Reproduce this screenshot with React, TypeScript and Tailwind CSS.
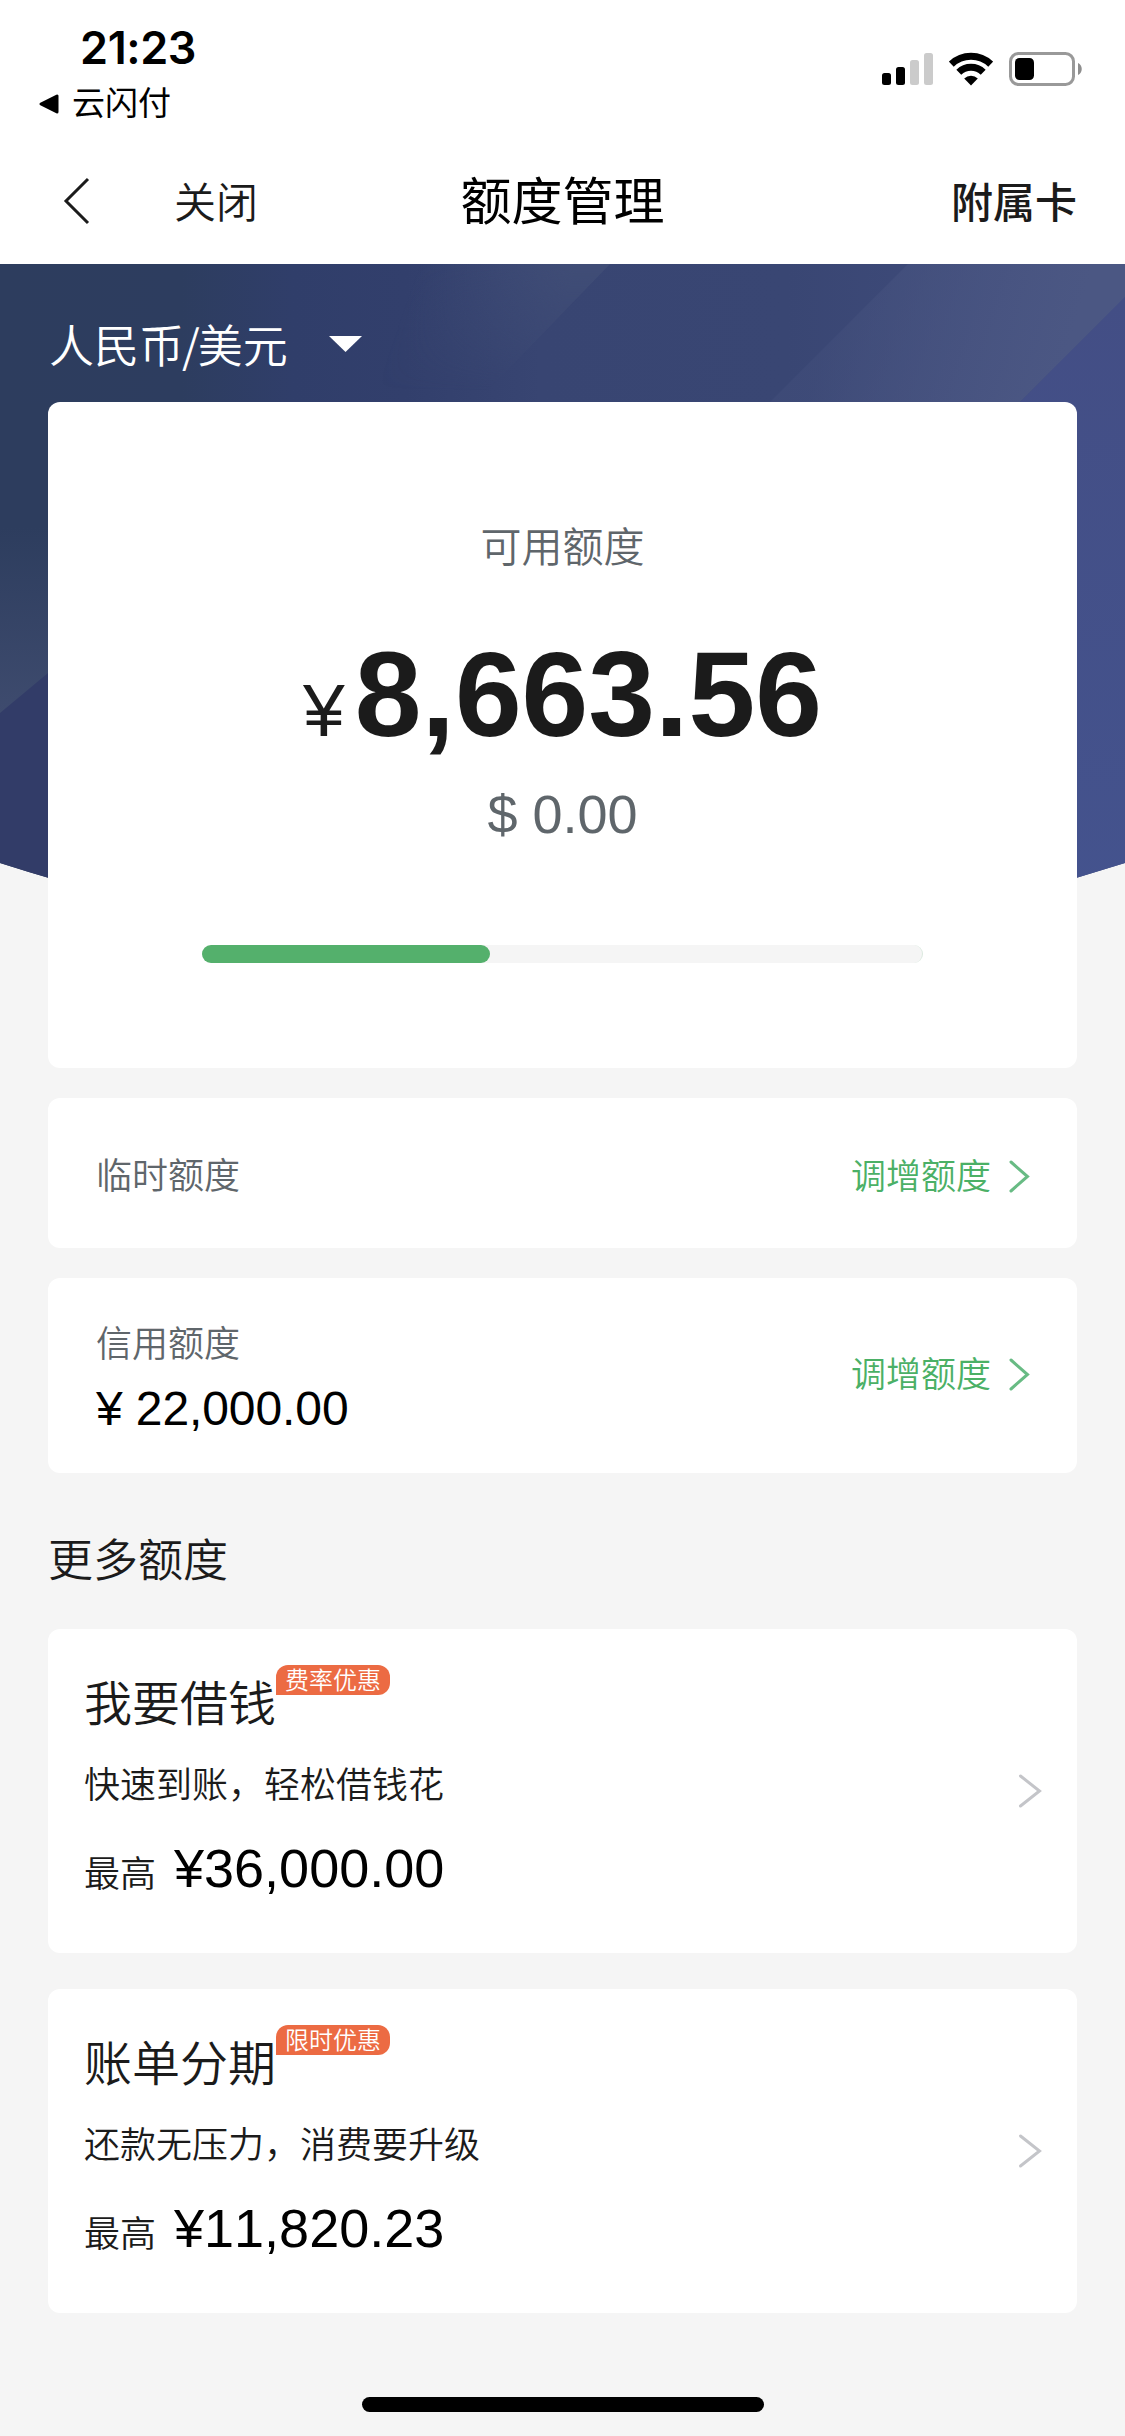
import React from 'react';

interface Offer {
  title: string;
  badge: string;
  desc: string;
  amount: string;
}

const offers: Offer[] = [
  { title: '我要借钱', badge: '费率优惠', desc: '快速到账，轻松借钱花', amount: '¥36,000.00' },
  { title: '账单分期', badge: '限时优惠', desc: '还款无压力，消费要升级', amount: '¥11,820.23' },
];

const usedPct = 40;

const StatusBar: React.FC = () => (
  <div className="flex h-[132px] justify-between pl-[38px] pr-[42px]">
    <div className="pt-[21px]">
      <div className="pl-[42px] font-[Inter] text-[45px] font-semibold leading-[53px] tracking-[-0.4px]">21:23</div>
      <div className="mt-[5px] flex items-center gap-[12px] text-[33px] leading-[50px]">
        <svg width="22" height="22" viewBox="0 0 22 22">
          <path d="M3 11 L19 3 V19 Z" stroke="#000" strokeWidth="3" strokeLinejoin="round" />
        </svg>
        云闪付
      </div>
    </div>
    <div className="mt-[52px] flex h-[34px] gap-[16px]">
      <svg width="51" height="34" viewBox="0 0 51 34">
        <rect x="0" y="21" width="9" height="12" rx="2.5" />
        <rect x="14" y="15" width="9" height="18" rx="2.5" />
        <rect x="28" y="8" width="9" height="25" rx="2.5" fill="#cbcbcb" />
        <rect x="42" y="1" width="9" height="32" rx="2.5" fill="#cbcbcb" />
      </svg>
      <svg width="44" height="34" viewBox="0 0 44 34" fill="none" stroke="#000" strokeWidth="7">
        <path d="M2.3 12.2 A28.5 28.5 0 0 1 41.7 12.2" />
        <path d="M9.8 20.2 A17.5 17.5 0 0 1 34.2 20.2" />
        <path d="M22 33.5 L15.2 26.6 A9.8 9.8 0 0 1 28.8 26.6 Z" fill="#000" stroke="none" />
      </svg>
      <svg width="74" height="34" viewBox="0 0 74 34">
        <rect x="1.5" y="1.5" width="63" height="31" rx="8" fill="none" stroke="#999" strokeWidth="3" />
        <rect x="6" y="6" width="19" height="22" rx="4.5" />
        <path d="M69 11 C74 13 74 21 69 23 Z" fill="#8e8e8e" />
      </svg>
    </div>
  </div>
);

const NavBar: React.FC = () => (
  <div className="grid h-[132px] grid-cols-3 items-center px-[48px] pt-[5px] text-[42px] text-[#1b1b1b]">
    <div className="flex items-center pl-[14px]">
      <svg width="28" height="48" viewBox="0 0 28 48" fill="none" stroke="#1b1b1b" strokeWidth="3">
        <path d="M26 2 L4 24 L26 46" />
      </svg>
      <span className="ml-[84px] pt-[5px] font-[350]">关闭</span>
    </div>
    <div className="pt-[5px] text-center text-[51px] text-black">额度管理</div>
    <div className="pt-[5px] text-right font-medium">附属卡</div>
  </div>
);

// Banner artwork behind the balance card
const BannerArt: React.FC = () => (
  <svg className="absolute inset-x-0 top-0" width="1125" height="660" viewBox="0 0 1125 660">
    <defs>
      <linearGradient id="base" x1="0" y1="0" x2="1" y2="0">
        <stop offset="0" stopColor="#2d3d5e" />
        <stop offset="0.16" stopColor="#2d3d5f" />
        <stop offset="0.26" stopColor="#303e6a" />
        <stop offset="0.36" stopColor="#323f6c" />
        <stop offset="0.48" stopColor="#384572" />
        <stop offset="0.7" stopColor="#394673" />
        <stop offset="1" stopColor="#434f80" />
      </linearGradient>
      <linearGradient id="beam" x1="420" y1="0" x2="560" y2="50" gradientUnits="userSpaceOnUse">
        <stop offset="0" stopColor="#404d76" stopOpacity="0" />
        <stop offset="1" stopColor="#404d76" />
      </linearGradient>
      <linearGradient id="beamFade" x1="0" y1="0" x2="0" y2="1">
        <stop offset="0" stopColor="#fff" />
        <stop offset="0.9" stopColor="#fff" stopOpacity="0" />
      </linearGradient>
      <mask id="beamMask">
        <rect width="1125" height="140" fill="url(#beamFade)" />
      </mask>
      <linearGradient id="glow" x1="840" y1="40" x2="1060" y2="110" gradientUnits="userSpaceOnUse">
        <stop offset="0" stopColor="#4b5783" stopOpacity="0.25" />
        <stop offset="1" stopColor="#4b5783" />
      </linearGradient>
      <linearGradient id="left" x1="0" y1="0" x2="0" y2="1">
        <stop offset="0" stopColor="#2d3d5e" />
        <stop offset="0.4" stopColor="#2d3d5e" />
        <stop offset="1" stopColor="#3e4b6e" />
      </linearGradient>
      <linearGradient id="right" x1="0" y1="0" x2="0" y2="1">
        <stop offset="0" stopColor="#434e85" />
        <stop offset="1" stopColor="#44538e" />
      </linearGradient>
      <clipPath id="curve">
        <path d="M0 0 H1125 V599 Q562.5 780 0 599 Z" />
      </clipPath>
    </defs>
    <g clipPath="url(#curve)">
      <rect width="1125" height="660" fill="url(#base)" />
      <path d="M330 0 H610 L475 140 H250 Z" fill="url(#beam)" mask="url(#beamMask)" />
      <path d="M908 0 H1125 V33 L1018 140 H768 Z" fill="url(#glow)" />
      <path d="M1125 33 V660 H1000 V158 Z" fill="url(#right)" />
      <rect y="140" width="60" height="520" fill="#323c68" />
      <path d="M0 140 H60 V399 L0 449 Z" fill="url(#left)" />
    </g>
  </svg>
);

const AdjustLink: React.FC = () => (
  <div className="flex items-center text-[35px] font-[350] text-[#4bb066]">
    <span className="pt-[2px]">调增额度</span>
    <svg className="ml-[17px]" width="24" height="36" viewBox="0 0 24 36" fill="none" stroke="#68bb84" strokeWidth="3" strokeLinecap="round">
      <path d="M3 4 L19.5 18.5 L3 33" />
    </svg>
  </div>
);

const OfferCard: React.FC<{ offer: Offer }> = ({ offer }) => (
  <div className="flex h-[324px] items-center justify-between rounded-xl bg-white pl-[36px] pr-[34px]">
    <div className="h-full pt-[36px] text-[#1b1b1b]">
      <div className="flex">
        <h3 className="mt-[5px] text-[48px] font-[350] leading-[70px]">{offer.title}</h3>
        <span className="h-[30px] rounded-xl rounded-bl-none bg-[#ec6b43] px-[9px] text-[24px] font-[350] leading-[31px] text-white">
          {offer.badge}
        </span>
      </div>
      <p className="mt-[20px] text-[36px] font-[350] leading-[52px]">{offer.desc}</p>
      <div className="mt-[21px] flex items-baseline gap-[18px] leading-[70px]">
        <span className="text-[36px] font-[350]">最高</span>
        <span className="text-[54px] text-black">{offer.amount}</span>
      </div>
    </div>
    <svg width="26" height="36" viewBox="0 0 26 36" fill="none" stroke="#c4c5c9" strokeWidth="3" strokeLinecap="round">
      <path d="M3.5 3 L22.5 18 L3.5 33" />
    </svg>
  </div>
);

export default function App() {
  return (
    <div className="flex h-[2436px] w-[1125px] flex-col bg-[#f5f5f5] font-['Liberation_Sans','Noto_Sans_CJK_SC',sans-serif] text-black [font-kerning:none]">
      <header className="bg-white">
        <StatusBar />
        <NavBar />
      </header>

      <main className="relative flex-1 px-[48px]">
        <BannerArt />

        {/* Currency switcher */}
        <div className="relative flex h-[138px] items-center pl-px pt-[22px] text-[45px] font-[350] text-white">
          <span className="pt-[4px]">
            人民币<span className="mx-[-2px] font-['Noto_Sans_CJK_SC']">/</span>美元
          </span>
          <svg className="ml-[41px]" width="33" height="16" viewBox="0 0 33 16" fill="#fff">
            <path d="M0 0 H33 L16.5 16 Z" />
          </svg>
        </div>

        {/* Available balance */}
        <section className="relative flex h-[666px] flex-col items-center rounded-xl bg-white">
          <p className="mt-[116px] text-[41px] font-[350] leading-[60px] text-[#5f666b]">可用额度</p>
          <div className="mt-[46px] flex items-baseline leading-[140px] text-[#1b1b1b]">
            <span className="text-[75px]">¥</span>
            <span className="ml-[10px] text-[120px] font-bold">8,663.56</span>
          </div>
          <p className="mt-px text-[54px] leading-[66px] text-[#5f666b]">$ 0.00</p>
          <div className="mt-[98px] h-[18px] w-[721px] rounded-full border-r border-[#dbe9df] bg-[#f5f5f5]">
            <div className="h-full rounded-full bg-[#54b06c]" style={{ width: `${usedPct}%` }} />
          </div>
        </section>

        <section className="mt-[30px] flex h-[150px] items-center justify-between rounded-xl bg-white pl-[48px] pr-[45px] pt-[6px]">
          <span className="pt-[2px] text-[36px] font-[350] text-[#5f666b]">临时额度</span>
          <AdjustLink />
        </section>

        <section className="mt-[30px] flex h-[195px] items-center justify-between rounded-xl bg-white pb-[3px] pl-[48px] pr-[45px]">
          <div className="pt-[10px]">
            <p className="text-[36px] font-[350] leading-[52px] text-[#5f666b]">信用额度</p>
            <p className="mt-[8px] text-[48px] leading-[60px] tracking-[-0.1px]">¥ 22,000.00</p>
          </div>
          <AdjustLink />
        </section>

        <h2 className="mt-[56px] text-[45px] font-[350] leading-[66px] text-[#1b1b1b]">更多额度</h2>
        <div className="mt-[34px] flex flex-col gap-[36px]">
          {offers.map((offer) => (
            <OfferCard key={offer.title} offer={offer} />
          ))}
        </div>
      </main>

      {/* Home indicator */}
      <div className="mx-auto mb-[24px] h-[15px] w-[402px] rounded-full bg-black" />
    </div>
  );
}
